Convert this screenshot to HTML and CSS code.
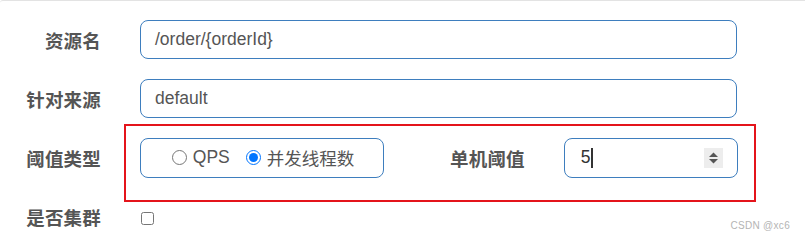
FILE: index.html
```html
<!DOCTYPE html>
<html lang="zh-CN">
<head>
<meta charset="utf-8">
<title>流控规则</title>
<link rel="stylesheet" href="styles.css">
</head>
<body>
<div class="panel">
  <div class="row">
    <div class="label">资源名</div>
    <div class="input wide">/order/{orderId}</div>
  </div>
  <div class="row">
    <div class="label">针对来源</div>
    <div class="input wide">default</div>
  </div>
  <div class="row marked">
    <div class="label">阈值类型</div>
    <div class="radio-box">
      <label class="radio-item"><input type="radio" name="grade"><span>QPS</span></label>
      <label class="radio-item"><input type="radio" name="grade" checked><span>并发线程数</span></label>
    </div>
    <div class="label inner-label">单机阈值</div>
    <div class="input number">
      <span class="value">5<span class="caret"></span></span>
      <svg class="spinner" width="19" height="20" viewBox="0 0 19 20">
        <rect width="19" height="20" fill="#ededed"/>
        <polygon points="5,9 14,9 9.5,4.5" fill="#555"/>
        <polygon points="5,11 14,11 9.5,15.5" fill="#555"/>
      </svg>
    </div>
    <div class="annotation"></div>
  </div>
  <div class="row">
    <div class="label">是否集群</div>
    <input class="check" type="checkbox">
  </div>
  <div class="watermark">CSDN @xc6</div>
</div>
</body>
</html>
```

FILE: styles.css
```css
html, body {
  margin: 0;
  padding: 0;
  background: #ffffff;
  overflow: hidden;
}
body {
  width: 805px;
  height: 237px;
  font-family: "Liberation Sans", "Noto Sans CJK SC", Arial, sans-serif;
  color: #555555;
}
.panel {
  position: relative;
  height: 236px;
  border-top: 1px solid #e3e3e3;
  border-top-left-radius: 3px;
  padding-top: 19px;
  box-sizing: border-box;
  display: flex;
  flex-direction: column;
  gap: 20px;
}
.row {
  position: relative;
  display: flex;
  align-items: center;
  height: 39px;
}
.label {
  width: 101px;
  flex: none;
  text-align: right;
  font-family: "Noto Sans CJK SC", sans-serif;
  font-weight: 700;
  font-size: 18.5px;
  color: #555555;
  margin-right: 39px;
  letter-spacing: 0.2px;
}
.input {
  box-sizing: border-box;
  height: 39px;
  border: 1px solid #3e7ebe;
  border-radius: 8px;
  display: flex;
  align-items: center;
  padding: 0 14px;
  font-size: 17.5px;
  color: #555555;
}
.wide {
  width: 597px;
}
.radio-box {
  box-sizing: border-box;
  width: 244px;
  height: 40px;
  border: 1px solid #3e7ebe;
  border-radius: 8px;
  display: flex;
  align-items: center;
  justify-content: center;
  gap: 16px;
  padding-left: 2px;
}
.radio-item {
  display: flex;
  align-items: center;
  gap: 6px;
  font-size: 17.5px;
  color: #555555;
}
.radio-item span {
  font-family: "Liberation Sans", "Noto Sans CJK SC", sans-serif;
}
.radio-item input {
  width: 15px;
  height: 15px;
  margin: 0;
}
.inner-label {
  width: auto;
  margin-left: 66px;
  margin-right: 39px;
}
.number {
  width: 174px;
  height: 40px;
  justify-content: space-between;
  padding-left: 16px;
  padding-right: 14px;
}
.value {
  display: flex;
  align-items: center;
  color: #333333;
}
.caret {
  display: inline-block;
  width: 2px;
  height: 20px;
  background: #333333;
  margin-left: 0px;
}
.spinner {
  display: block;
}
.annotation {
  position: absolute;
  left: 124px;
  top: -14px;
  width: 632px;
  height: 78px;
  box-sizing: border-box;
  border: 2px solid #e4141b;
  pointer-events: none;
}
.check {
  width: 13px;
  height: 13px;
  margin: 4px 0 0 1px;
}
.watermark {
  position: absolute;
  right: 15px;
  top: 219px;
  font-family: "Liberation Sans", sans-serif;
  font-size: 10px;
  color: #b4b4b4;
  letter-spacing: 0.3px;
}
```
